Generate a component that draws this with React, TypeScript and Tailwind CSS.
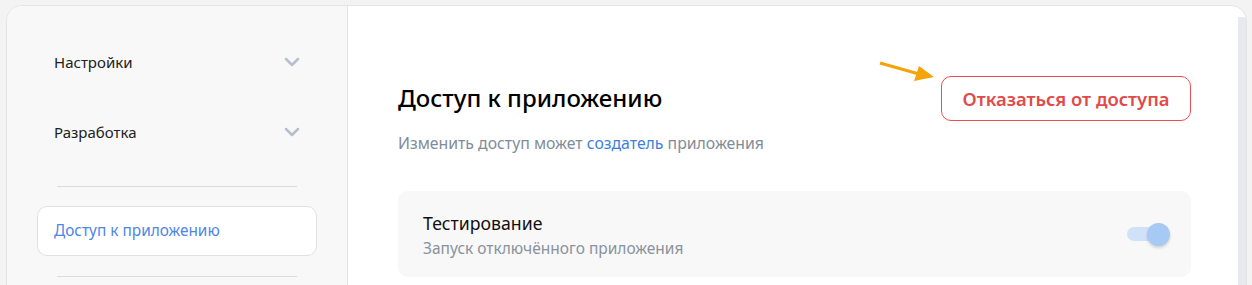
import { ChevronDown } from 'lucide-react';

const font = { fontFamily: '"Noto Sans", "Open Sans", sans-serif' };

export default function App() {
  return (
    <div className="h-[285px] overflow-hidden bg-[#f3f3f3] pl-[6px] pt-[5px] pr-[5px]" style={font}>
      <div className="flex h-[300px] rounded-t-[16px] border border-[#e4e4e4] bg-white overflow-hidden">
        {/* Sidebar */}
        <aside className="flex flex-col w-[341px] shrink-0 bg-[#f8f8f8] border-r border-[#e3e3e3] px-[30px] pt-[35px]">
          {['Настройки', 'Разработка'].map((t) => (
            <div key={t} className="flex items-center justify-between h-[42px] pl-[17px] pr-[13px] mb-[28px]">
              <span className="text-[15px] text-[#222]">{t}</span>
              <ChevronDown className="h-[24px] w-[24px] text-[#b6bfcc]" strokeWidth={2.5} />
            </div>
          ))}
          <div className="mx-[20px] mt-[5px] border-t border-[#dcdcdc]" />
          <div className="mt-[19px] h-[50px] flex items-center rounded-[10px] border border-[#e0e0e0] bg-white pl-[16px]">
            <span className="text-[15.4px] text-[#4d86e8]">Доступ к приложению</span>
          </div>
          <div className="mx-[20px] mt-[20px] border-t border-[#dcdcdc]" />
        </aside>

        {/* Main */}
        <main className="flex-1 pl-[50px] pr-[47px] pt-[70px]">
          <div className="flex items-start justify-between">
            <div className="pt-[7px]">
              <h1 className="text-[24px] font-medium leading-[30px] text-black">Доступ к приложению</h1>
              <p className="mt-[20px] text-[15.8px] leading-[20px] text-[#818c99]">
                Изменить доступ может <span className="text-[#3f7fdc]">создатель</span> приложения
              </p>
            </div>
            <div className="relative">
              <svg className="absolute left-[-64px] top-[-16px]" width="60" height="24" viewBox="0 0 60 24">
                <line x1="3" y1="3" x2="42" y2="14" stroke="#f5a30a" strokeWidth="3" />
                <polygon points="57,17 37,21 42,6" fill="#f5a30a" />
              </svg>
              <button className="h-[45px] w-[250px] rounded-[10px] border border-[#e85050] text-[18.4px] font-semibold text-[#e24a4a]">
                Отказаться от доступа
              </button>
            </div>
          </div>

          <div className="mt-[38px] flex items-center justify-between rounded-[10px] bg-[#f8f8f8] pl-[25px] pr-[21px] h-[86px]">
            <div>
              <div className="text-[17.7px] text-[#111] leading-[24px]">Тестирование</div>
              <div className="mt-[3px] text-[15.5px] text-[#8a929c] leading-[20px]">Запуск отключённого приложения</div>
            </div>
            <div className="relative w-[43px] h-[23px] flex items-center">
              <div className="h-[14px] w-[38px] rounded-full bg-[#cfe2f8]" />
              <div className="absolute right-0 top-0 h-[23px] w-[23px] rounded-full bg-[#a6caf3] shadow-[0_2px_3px_rgba(0,0,0,0.15)]" />
            </div>
          </div>
        </main>

        {/* Scrollbar */}
        <div className="w-[8px] shrink-0 mt-[11px] bg-[#e8e9ee]" />
      </div>
    </div>
  );
}
